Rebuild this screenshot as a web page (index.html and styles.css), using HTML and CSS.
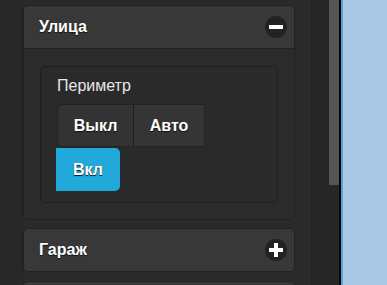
FILE: index.html
```html
<!DOCTYPE html>
<html lang="ru">
<head>
<meta charset="utf-8">
<link rel="stylesheet" href="styles.css">
</head>
<body>
<div class="app">
  <div class="gutter"></div>
  <div class="panel">
    <div class="card card-open">
      <div class="card-head">
        <span class="card-title">Улица</span>
        <span class="icon-btn"><svg width="14" height="14" viewBox="0 0 14 14"><rect x="0" y="5" width="14" height="4" fill="#fff"/></svg></span>
      </div>
      <div class="card-body">
        <div class="field">
          <div class="field-label">Периметр</div>
          <div class="group">
            <div class="btn btn-first">Выкл</div>
            <div class="btn btn-mid">Авто</div>
          </div>
          <div class="group">
            <div class="btn btn-on">Вкл</div>
          </div>
        </div>
      </div>
    </div>
    <div class="card card-closed">
      <div class="card-head">
        <span class="card-title">Гараж</span>
        <span class="icon-btn"><svg width="14" height="14" viewBox="0 0 14 14"><rect x="0" y="5" width="14" height="4" fill="#fff"/><rect x="5" y="0" width="4" height="14" fill="#fff"/></svg></span>
      </div>
    </div>
    <div class="card card-closed">
      <div class="card-head"></div>
    </div>
  </div>
  <div class="strip"></div>
  <div class="scroll"><div class="thumb"></div></div>
  <div class="edge"></div>
  <div class="view"></div>
</div>
</body>
</html>
```

FILE: styles.css
```css
html, body {
  margin: 0;
  padding: 0;
  height: 285px;
  overflow: hidden;
  background: #2a2a2a;
}
.app {
  display: flex;
  height: 285px;
  font-family: "Liberation Sans", Arial, sans-serif;
}
.gutter {
  width: 22px;
  background: #282828;
}
.panel {
  width: 272px;
  background: #2a2a2a;
  border-left: 1px solid #232323;
  border-right: 1px solid #232323;
  padding: 5px 16px 0 0;
  overflow: hidden;
}
.card {
  border: 1px solid #212121;
  border-radius: 5px;
  background: #2b2b2b;
  overflow: hidden;
}
.card-open {
  margin-bottom: 8px;
}
.card-closed {
  margin-bottom: 9px;
}
.card-head {
  height: 42px;
  background: #383838;
  border-bottom: 1px solid #222;
  display: flex;
  align-items: center;
  justify-content: space-between;
  padding: 0 7px 0 15px;
}
.card-closed .card-head {
  border-bottom: none;
}
.card-title {
  color: #fff;
  font-weight: bold;
  font-size: 16px;
  text-shadow: 0 1px 1px #111;
}
.icon-btn {
  width: 22px;
  height: 22px;
  border-radius: 50%;
  background: #222;
  display: flex;
  align-items: center;
  justify-content: center;
}
.card-body {
  padding: 17px 16px 16px 16px;
}
.field {
  border: 1px solid #1f1f1f;
  border-radius: 5px;
  background: #2a2a2a;
  padding: 10px 16px 11px 15px;
  height: 114px;
}
.field-label {
  color: #e6e6e6;
  font-size: 16px;
  line-height: 18px;
  margin: 0 0 9px 1px;
}
.group {
  display: flex;
}
.btn {
  height: 43px;
  display: flex;
  align-items: center;
  justify-content: center;
  color: #fff;
  font-weight: bold;
  font-size: 16px;
  text-shadow: 0 1px 1px #111;
  box-sizing: border-box;
}
.btn-first {
  margin-left: 1px;
  width: 77px;
  background: #333;
  border: 1px solid #222;
  border-right: 1px solid #1e1e1e;
  border-radius: 5px 0 0 5px;
}
.btn-mid {
  width: 71px;
  background: #353535;
  border: 1px solid #222;
  border-left: none;
}
.btn-on {
  width: 64px;
  background: #22a9dc;
  border-radius: 0 5px 5px 0;
  margin-top: 1px;
}
.strip {
  width: 17px;
  background: #262626;
}
.scroll {
  width: 10px;
  background: #262626;
}
.thumb {
  height: 185px;
  background: #555;
}
.edge {
  width: 2px;
  background: #000;
  border-right: 2px solid #5b9ee0;
}
.view {
  flex: 1;
  background: #a8c8e4;
}
```
